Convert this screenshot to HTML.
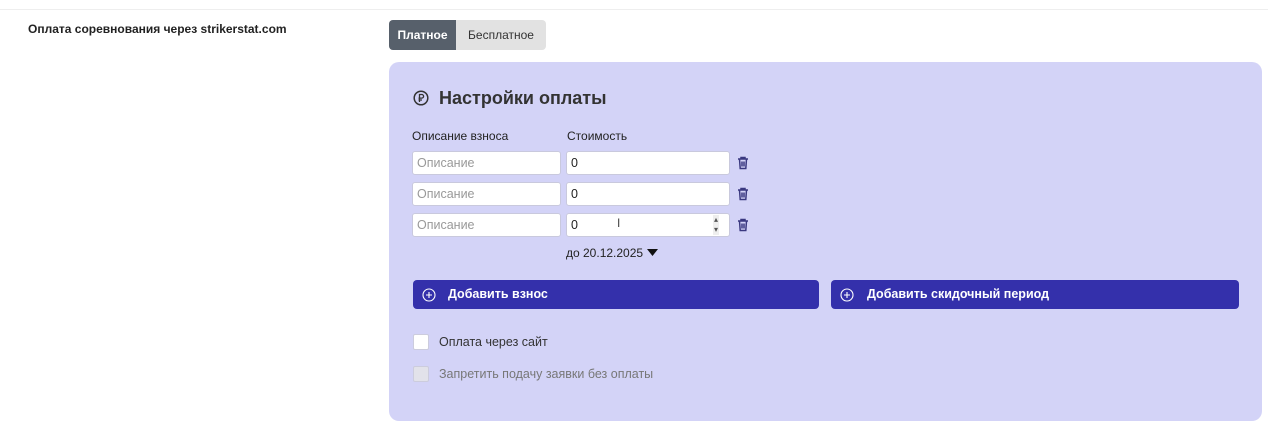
<!DOCTYPE html><html><head><meta charset="utf-8"><style>
body{margin:0;width:1268px;height:428px;background:#fff;font-family:"Liberation Sans",sans-serif;position:relative;overflow:hidden;color:#222}
.a{position:absolute}
.inp{position:absolute;background:#fff;border:1px solid #c9c9dd;border-radius:3px;height:24px;box-sizing:border-box;font-size:12.5px;line-height:22px;padding-left:4px}
.btn{position:absolute;background:#3430ab;border-radius:4px;height:29px;color:#fff;font-weight:bold;font-size:12.5px;line-height:29px}
.tr{position:absolute;width:12px;height:14px}
</style></head><body>
<div class="a" style="left:0;top:9px;width:1268px;height:1px;background:#eee"></div>
<div class="a" style="left:28px;top:22px;font-size:12px;font-weight:bold;color:#222">Оплата соревнования через strikerstat.com</div>
<div class="a" style="left:389px;top:20px;width:157px;height:30px;border-radius:4px;background:#e2e2e2;overflow:hidden">
<div class="a" style="left:0;top:0;width:67px;height:30px;background:#57606b;color:#fff;font-size:12px;font-weight:bold;line-height:30px;text-align:center">Платное</div>
<div class="a" style="left:67px;top:0;width:90px;height:30px;color:#333;font-size:12px;line-height:30px;text-align:center">Бесплатное</div></div>
<div class="a" style="left:389px;top:62px;width:873px;height:359px;background:#d3d3f7;border-radius:10px"></div>
<svg class="a" style="left:413px;top:90px" width="16" height="16" viewBox="0 0 16 16"><circle cx="8" cy="8" r="6.8" fill="none" stroke="#333" stroke-width="1.5"/><path d="M6.5 12V4.5h2.3a1.8 1.8 0 0 1 0 3.6H5.5M5.5 10h3.5" fill="none" stroke="#333" stroke-width="1.3"/></svg>
<div class="a" style="left:439px;top:88px;font-size:18px;font-weight:bold;color:#333">Настройки оплаты</div>
<div class="a" style="left:412px;top:129px;font-size:12px;color:#222">Описание взноса</div>
<div class="a" style="left:567px;top:129px;font-size:12px;color:#222">Стоимость</div>
<div class="inp" style="left:412px;top:151px;width:149px;color:#999">Описание</div>
<div class="inp" style="left:566px;top:151px;width:164px">0</div>
<div class="inp" style="left:412px;top:182px;width:149px;color:#999">Описание</div>
<div class="inp" style="left:566px;top:182px;width:164px">0</div>
<div class="inp" style="left:412px;top:213px;width:149px;color:#999">Описание</div>
<div class="inp" style="left:566px;top:213px;width:164px">0<span style="position:absolute;left:146px;top:1px;font-size:8px;line-height:10px;color:#555;background:#eee;padding:0 1px">▴<br>▾</span><span style="position:absolute;left:50px;top:-2px;font-size:12px;color:#444">I</span></div>
<svg class="tr" style="left:737px;top:156px" viewBox="0 0 12 14"><path d="M1 3h10M4 3V1.5h4V3M2.5 3l.7 9.5h5.6L9.5 3M5 5.5v5M7 5.5v5" fill="none" stroke="#3a3880" stroke-width="1.5"/></svg>
<svg class="tr" style="left:737px;top:187px" viewBox="0 0 12 14"><path d="M1 3h10M4 3V1.5h4V3M2.5 3l.7 9.5h5.6L9.5 3M5 5.5v5M7 5.5v5" fill="none" stroke="#3a3880" stroke-width="1.5"/></svg>
<svg class="tr" style="left:737px;top:218px" viewBox="0 0 12 14"><path d="M1 3h10M4 3V1.5h4V3M2.5 3l.7 9.5h5.6L9.5 3M5 5.5v5M7 5.5v5" fill="none" stroke="#3a3880" stroke-width="1.5"/></svg>
<div class="a" style="left:566px;top:246px;font-size:12px;color:#222">до 20.12.2025</div>
<svg class="a" style="left:647px;top:249px" width="11" height="7" viewBox="0 0 11 7"><path d="M0 0h11L5.5 7z" fill="#111"/></svg>
<div class="btn" style="left:413px;top:280px;width:406px"><svg class="a" style="left:9px;top:8px" width="14" height="14" viewBox="0 0 14 14"><circle cx="7" cy="7" r="6" fill="none" stroke="#fff" stroke-width="1.1"/><path d="M7 4v6M4 7h6" stroke="#fff" stroke-width="1.1"/></svg><span class="a" style="left:35px">Добавить взнос</span></div>
<div class="btn" style="left:831px;top:280px;width:408px"><svg class="a" style="left:9px;top:8px" width="14" height="14" viewBox="0 0 14 14"><circle cx="7" cy="7" r="6" fill="none" stroke="#fff" stroke-width="1.1"/><path d="M7 4v6M4 7h6" stroke="#fff" stroke-width="1.1"/></svg><span class="a" style="left:36px">Добавить скидочный период</span></div>
<div class="a" style="left:413px;top:334px;width:16px;height:16px;background:#fff;border:1px solid #ccd;border-radius:2px;box-sizing:border-box"></div>
<div class="a" style="left:439px;top:335px;font-size:12.5px;color:#333">Оплата через сайт</div>
<div class="a" style="left:413px;top:366px;width:16px;height:16px;background:#e2e2ea;border:1px solid #ccd;border-radius:2px;box-sizing:border-box"></div>
<div class="a" style="left:439px;top:367px;font-size:12.5px;color:#777">Запретить подачу заявки без оплаты</div>
</body></html>
